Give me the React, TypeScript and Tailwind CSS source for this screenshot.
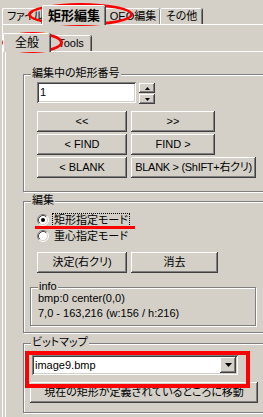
import React from 'react';

// classic win32 look
const raised =
  'bg-[#d4d0c8] shadow-[inset_-1px_-1px_0_#404040,inset_1px_1px_0_#ffffff,inset_-2px_-2px_0_#808080]';
const sunken =
  'bg-white shadow-[inset_1px_1px_0_#808080,inset_-1px_-1px_0_#ffffff,inset_2px_2px_0_#404040,inset_-2px_-2px_0_#d4d0c8]';
const etched = 'border border-[#808080] shadow-[inset_1px_1px_0_#ffffff,1px_1px_0_#ffffff]';

const Btn: React.FC<{ className?: string; children: React.ReactNode }> = ({ className = '', children }) => (
  <div className={`${raised} h-[21px] flex items-center justify-center whitespace-nowrap leading-none ${className}`}>
    {children}
  </div>
);

const Tab: React.FC<{ className?: string; selected?: boolean; children: React.ReactNode }> = ({
  className = '',
  selected,
  children,
}) =>
  selected ? (
    <div
      className={`relative z-10 mb-[-1px] flex items-center justify-center whitespace-nowrap bg-[#d4d0c8] border-t border-l border-white rounded-t-[2px] shadow-[inset_-1px_0_0_#808080,1px_0_0_#404040] ${className}`}
    >
      {children}
    </div>
  ) : (
    <div
      className={`h-[16px] flex items-center whitespace-nowrap border-t border-l border-white rounded-t-[2px] shadow-[inset_-1px_0_0_#808080,1px_0_0_#404040] ${className}`}
    >
      {children}
    </div>
  );

const Group: React.FC<{ title: string; className?: string; children: React.ReactNode }> = ({
  title,
  className = '',
  children,
}) => (
  <div className={`relative ${etched} ${className}`}>
    <span className="absolute -top-[9px] left-[7px] bg-[#d4d0c8] px-[1px] leading-[14px]">{title}</span>
    {children}
  </div>
);

const Radio: React.FC<{ checked?: boolean }> = ({ checked }) => (
  <svg width="12" height="12" viewBox="0 0 12 12" className="shrink-0">
    <circle cx="6" cy="6" r="5" fill="#ffffff" />
    <path d="M2.11 9.89 A5.5 5.5 0 0 1 9.89 2.11" stroke="#808080" fill="none" />
    <path d="M9.89 2.11 A5.5 5.5 0 0 1 2.11 9.89" stroke="#ffffff" fill="none" />
    <path d="M2.82 9.18 A4.5 4.5 0 0 1 9.18 2.82" stroke="#404040" fill="none" />
    <path d="M9.18 2.82 A4.5 4.5 0 0 1 2.82 9.18" stroke="#d4d0c8" fill="none" />
    {checked && <circle cx="6" cy="6" r="2" fill="#000000" />}
  </svg>
);

export default function App() {
  return (
    <div className="relative w-[263px] h-[417px] overflow-hidden bg-[#d4d0c8] text-black text-[11px] font-['Liberation_Sans','Noto_Sans_CJK_JP',sans-serif] [font-feature-settings:'palt']">
      {/* outer tabs */}
      <div className="flex items-end h-[24px] pl-[2px]">
        <Tab className="w-[40px] pl-[4px] tracking-[-0.5px]">ファイル</Tab>
        <Tab selected className="w-[63px] h-[20px] text-[13px] font-bold">
          矩形編集
        </Tab>
        <Tab className="w-[55px] justify-center">OEO編集</Tab>
        <Tab className="w-[42px] justify-center">その他</Tab>
      </div>

      <div className="ml-[2px] w-[300px] h-[400px] border-l border-t border-white">
        {/* inner tabs */}
        <div className="flex items-end h-[26px]">
          <Tab selected className="w-[47px] h-[19px] text-[12px]">
            全般
          </Tab>
          <Tab className="w-[41px] justify-center">Tools</Tab>
        </div>

        <div className="ml-[2px] h-[380px] border-l border-t border-white">
          <div className="flex flex-col w-[245px] ml-[17px]">
            <Group title="編集中の矩形番号" className="mt-[22px] pb-[13px]">
              <div className="flex items-start ml-[13px] mt-[7px]">
                <div className={`${sunken} w-[99px] h-[21px] flex items-center pl-[3px] leading-none`}>1</div>
                <div className="ml-[3px] mt-[1px] flex flex-col gap-[1px]">
                  <div className={`${raised} w-[16px] h-[10px] flex items-center justify-center`}>
                    <svg width="5" height="3" viewBox="0 0 5 3">
                      <polygon points="2.5,0 5,3 0,3" fill="#000000" />
                    </svg>
                  </div>
                  <div className={`${raised} w-[16px] h-[10px] flex items-center justify-center`}>
                    <svg width="5" height="3" viewBox="0 0 5 3">
                      <polygon points="0,0 5,0 2.5,3" fill="#000000" />
                    </svg>
                  </div>
                </div>
              </div>
              <div className="flex flex-col gap-[2px] ml-[13px] mt-[7px]">
                <div className="flex gap-[4px]">
                  <Btn className="w-[90px]">&lt;&lt;</Btn>
                  <Btn className="w-[84px]">&gt;&gt;</Btn>
                </div>
                <div className="flex gap-[4px]">
                  <Btn className="w-[90px]">&lt; FIND</Btn>
                  <Btn className="w-[84px]">FIND &gt;</Btn>
                </div>
                <div className="flex gap-[4px]">
                  <Btn className="w-[90px]">&lt; BLANK</Btn>
                  <Btn className="w-[125px] tracking-[-0.3px]">BLANK &gt; (ShIFT+右クリ)</Btn>
                </div>
              </div>
            </Group>

            <Group title="編集" className="mt-[9px] pb-[6px]">
              <div className="flex flex-col ml-[13px] mt-[10px]">
                <div className="h-[16px] flex items-center gap-[3px]">
                  <Radio checked />
                  <span className="border border-dotted border-black px-[1px] leading-[12px]">矩形指定モード</span>
                </div>
                <div className="h-[16px] flex items-center gap-[3px]">
                  <Radio />
                  <span className="px-[2px] leading-[12px]">重心指定モード</span>
                </div>
              </div>
              <div className="flex gap-[4px] ml-[13px] mt-[8px]">
                <Btn className="w-[90px]">決定(右クリ)</Btn>
                <Btn className="w-[87px]">消去</Btn>
              </div>
              <Group title="info" className="ml-[6px] mt-[14px] w-[226px] pl-[7px] pt-[3px] pb-[4px]">
                <div className="leading-[15px] whitespace-nowrap">bmp:0 center(0,0)</div>
                <div className="leading-[15px] whitespace-nowrap">7,0 - 163,216 (w:156 / h:216)</div>
              </Group>
            </Group>

            <Group title="ビットマップ" className="mt-[10px] pb-[9px]">
              <div className={`${sunken} ml-[8px] mt-[11px] w-[206px] h-[20px] flex items-center pl-[3px] pr-[2px]`}>
                <span className="flex-1 leading-none">image9.bmp</span>
                <div className={`${raised} w-[16px] h-[16px] flex items-center justify-center`}>
                  <svg width="7" height="4" viewBox="0 0 7 4">
                    <polygon points="0,0 7,0 3.5,4" fill="#000000" />
                  </svg>
                </div>
              </div>
              <Btn className="ml-[6px] mt-[7px] w-[228px]">現在の矩形が定義されているところに移動</Btn>
            </Group>
          </div>
        </div>
      </div>

      {/* red annotations over the screenshot */}
      <div className="pointer-events-none absolute left-[28px] top-[3px] w-[105px] h-[23px] rounded-[50%] border-[3px] border-[#ff0000]" />
      <div className="pointer-events-none absolute left-[2px] top-[32px] w-[61px] h-[21px] rounded-[50%] border-[3px] border-[#ff0000]" />
      <div className="pointer-events-none absolute left-[35px] top-[226px] w-[100px] h-[3px] bg-[#ff0000]" />
      <div className="pointer-events-none absolute left-[25px] top-[351px] w-[225px] h-[37px] border-[4px] border-[#ff0000]" />
    </div>
  );
}
